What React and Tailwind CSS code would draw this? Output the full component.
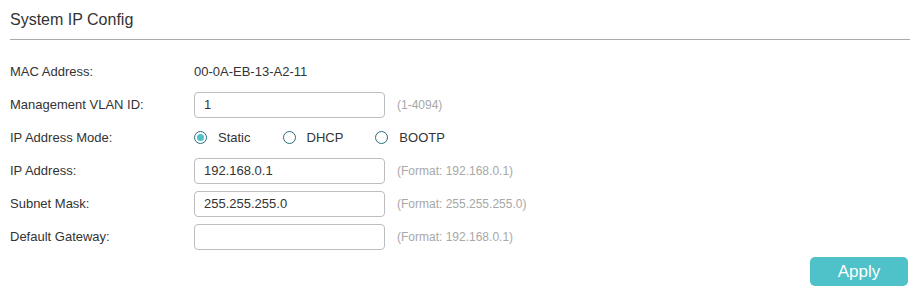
import React, { useState } from "react";

const font = { fontFamily: '"Liberation Sans", Arial, sans-serif' };

const Radio = ({ label, checked, onClick }) => (
  <label className="flex items-center cursor-pointer" onClick={onClick}>
    <span className="w-[13px] h-[13px] rounded-full border-[1.5px] border-[#2e6b78] flex items-center justify-center">
      {checked && <span className="w-[7px] h-[7px] rounded-full bg-[#4fc1c9]" />}
    </span>
    <span className="ml-[11px] text-[13px] text-[#333]">{label}</span>
  </label>
);

const Row = ({ label, children }) => (
  <div className="flex items-center h-[33px]">
    <div className="w-[184px] text-[13px] text-[#333]">{label}</div>
    <div className="flex items-center">{children}</div>
  </div>
);

const Field = ({ value, hint }) => (
  <>
    <input
      defaultValue={value}
      className="w-[191px] h-[26px] border border-[#bdbdbd] rounded-[4px] px-[9px] text-[13px] text-[#333] outline-none"
      style={font}
    />
    <span className="ml-[12px] text-[12px] text-[#a8a8a8]">{hint}</span>
  </>
);

export default function App() {
  const [mode, setMode] = useState("Static");

  return (
    <div className="w-[915px] h-[304px] bg-white pl-[10px] pr-[5px] pt-[10px]" style={font}>
      <div className="text-[16px] text-[#333] h-[30px] border-b border-[#aaa] leading-[20px]">
        System IP Config
      </div>
      <div className="mt-[15px]">
        <Row label="MAC Address:">
          <span className="text-[13px] text-[#333]">00-0A-EB-13-A2-11</span>
        </Row>
        <Row label="Management VLAN ID:">
          <Field value="1" hint="(1-4094)" />
        </Row>
        <Row label="IP Address Mode:">
          <div className="flex items-center gap-[32px]">
            {["Static", "DHCP", "BOOTP"].map((m) => (
              <Radio key={m} label={m} checked={mode === m} onClick={() => setMode(m)} />
            ))}
          </div>
        </Row>
        <Row label="IP Address:">
          <Field value="192.168.0.1" hint="(Format: 192.168.0.1)" />
        </Row>
        <Row label="Subnet Mask:">
          <Field value="255.255.255.0" hint="(Format: 255.255.255.0)" />
        </Row>
        <Row label="Default Gateway:">
          <Field value="" hint="(Format: 192.168.0.1)" />
        </Row>
      </div>
      <div className="flex justify-end mt-[4px]">
        <button className="w-[98px] h-[29px] mr-[2px] rounded-[5px] bg-[#4fc1c9] text-white text-[17px]">
          Apply
        </button>
      </div>
    </div>
  );
}
